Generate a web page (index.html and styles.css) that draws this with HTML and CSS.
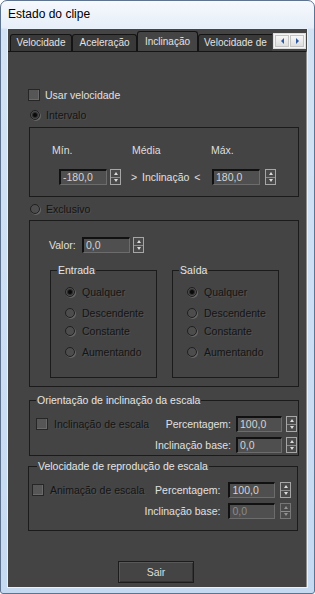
FILE: index.html
```html
<!doctype html>
<html>
<head>
<meta charset="utf-8">
<title>Estado do clipe</title>
<link rel="stylesheet" href="styles.css">
</head>
<body>
<div class="window">
	<div class="titlebar">Estado do clipe</div>
	<div class="client">
		<div class="tabstrip">
			<div class="tabs">
				<div class="tab t1">Velocidade</div>
				<div class="tab t2">Aceleração</div>
				<div class="tab t3 active">Inclinação</div>
				<div class="tab t4">Velocidade de</div>
			</div>
			<div class="tabscroll">
				<span class="sb"><i class="tri-l"></i></span>
				<span class="sb"><i class="tri-r"></i></span>
			</div>
		</div>

		<div class="panel">
			<div class="row check-row">
				<span class="chk"></span><span class="lbl">Usar velocidade</span>
			</div>
			<div class="row radio-row r-intervalo">
				<span class="radio on"></span><span class="lbl off">Intervalo</span>
			</div>

			<div class="box box-range">
				<div class="range-head">
					<span class="h-min">Mín.</span>
					<span class="h-mid">Média</span>
					<span class="h-max">Máx.</span>
				</div>
				<div class="range-vals">
					<span class="field">-180,0</span>
					<span class="spin"><i class="up"></i><i class="dn"></i></span>
					<span class="mid-txt">&gt; Inclinação &lt;</span>
					<span class="field">180,0</span>
					<span class="spin"><i class="up"></i><i class="dn"></i></span>
				</div>
			</div>

			<div class="row radio-row r-exclusivo">
				<span class="radio"></span><span class="lbl off">Exclusivo</span>
			</div>

			<div class="box box-excl">
				<div class="valor-row">
					<span class="valor-lbl">Valor:</span>
					<span class="field">0,0</span>
					<span class="spin"><i class="up"></i><i class="dn"></i></span>
				</div>
				<div class="groups">
					<fieldset class="grp">
						<legend>Entrada</legend>
						<div class="opts">
							<div class="opt"><span class="radio on"></span><span class="lbl off">Qualquer</span></div>
							<div class="opt"><span class="radio"></span><span class="lbl off">Descendente</span></div>
							<div class="opt"><span class="radio"></span><span class="lbl off">Constante</span></div>
							<div class="opt"><span class="radio"></span><span class="lbl off">Aumentando</span></div>
						</div>
					</fieldset>
					<fieldset class="grp">
						<legend>Saída</legend>
						<div class="opts">
							<div class="opt"><span class="radio on"></span><span class="lbl off">Qualquer</span></div>
							<div class="opt"><span class="radio"></span><span class="lbl off">Descendente</span></div>
							<div class="opt"><span class="radio"></span><span class="lbl off">Constante</span></div>
							<div class="opt"><span class="radio"></span><span class="lbl off">Aumentando</span></div>
						</div>
					</fieldset>
				</div>
			</div>

			<fieldset class="sect sect-orient">
				<legend>Orientação de inclinação da escala</legend>
				<div class="sect-body">
					<div class="sect-left">
						<span class="chk"></span><span class="lbl off">Inclinação de escala</span>
					</div>
					<div class="pairs">
						<span class="p-lbl">Percentagem:</span>
						<span class="field">100,0</span>
						<span class="spin"><i class="up"></i><i class="dn"></i></span>
						<span class="p-lbl">Inclinação base:</span>
						<span class="field">0,0</span>
						<span class="spin"><i class="up"></i><i class="dn"></i></span>
					</div>
				</div>
			</fieldset>

			<fieldset class="sect sect-speed">
				<legend>Velocidade de reprodução de escala</legend>
				<div class="sect-body">
					<div class="sect-left">
						<span class="chk"></span><span class="lbl off">Animação de escala</span>
					</div>
					<div class="pairs">
						<span class="p-lbl">Percentagem:</span>
						<span class="field">100,0</span>
						<span class="spin"><i class="up"></i><i class="dn"></i></span>
						<span class="p-lbl">Inclinação base:</span>
						<span class="field dim">0,0</span>
						<span class="spin dim"><i class="up"></i><i class="dn"></i></span>
					</div>
				</div>
			</fieldset>

			<div class="btn-sair">Sair</div>
		</div>
	</div>
</div>
</body>
</html>
```

FILE: styles.css
```css
*{ margin:0; padding:0; box-sizing:border-box;}
body{ width:315px; height:594px; overflow:hidden; font-family:"Liberation Sans", Arial, sans-serif; font-size:10.5px; background:#fff;}

/* janela */
.window{ height:594px; display:flex; flex-direction:column; border:1px solid #5d7390; border-radius:7px 7px 3px 3px; background:linear-gradient(to bottom, #f6f9fd 0, #e6eef8 27px, #d3e3f5 28px, #c5d9f1 100%);}
.titlebar{ height:28px; padding:6px 0 0 7px; font-size:12px; line-height:15px; color:#000;}
.client{ flex:1; margin:0 7px 6px; background:#444; display:flex; flex-direction:column; box-shadow:0 0 0 1px #e9f1fa;}

/* abas */
.tabstrip{ height:22px; display:flex; padding-left:2px; position:relative; z-index:1;}
.tabs{ width:262px; display:flex; align-items:flex-end; overflow:hidden;}
.tab{ flex:none; height:17px; border:1px solid #141414; border-bottom:none; border-radius:3px 3px 0 0; background:#393939; color:#e2e2e2; font-size:10px; line-height:15px; text-align:center; white-space:nowrap; overflow:hidden;}
.tab.active{ height:21px; margin-bottom:-1px; background:#444; line-height:19px;}
.t1{ width:62px;}
.t2{ width:65px;}
.t3{ width:61px;}
.t4{ width:90px; text-align:left; padding-left:5px;}
.tabscroll{ margin:4px 0 0 1px; width:33px; height:16px; display:flex; gap:1px; padding:1px; background:#f4f4f4; border:1px solid #dcdcdc;}
.sb{ flex:1; display:flex; align-items:center; justify-content:center; background:linear-gradient(#f7f7f7, #dedede); border:1px solid #c4c4c4;}
.tri-l{ border-top:3px solid transparent; border-bottom:3px solid transparent; border-right:3px solid #2f5aa0;}
.tri-r{ border-top:3px solid transparent; border-bottom:3px solid transparent; border-left:3px solid #2f5aa0;}

.panel{ flex:1; border-top:1px solid #151515; border-right:1px solid #8f8f8f; display:flex; flex-direction:column; align-items:flex-start;}

/* controles */
.row{ display:flex; align-items:center; height:14px;}
.lbl{ color:#e0e0e0; line-height:14px; white-space:nowrap;}
.lbl.off{ color:#141414; text-shadow:1px 1px 0 #505050;}
.chk{ flex:none; width:12px; height:12px; background:#565656; border:1px solid #262626; box-shadow:inset -1px -1px 0 #6a6a6a;}
.radio{ flex:none; width:10px; height:10px; border-radius:50%; background:#4d4d4d; border:1px solid #202020; box-shadow:1px 1px 0 #666; display:flex; align-items:center; justify-content:center;}
.radio.on::after{ content:""; width:4px; height:4px; border-radius:50%; background:#0a0a0a; box-shadow:0 0 0 1px #2c2c2c;}

.check-row{ margin:36px 0 0 20px; height:13px; gap:5px;}
.radio-row{ margin-left:22px; gap:6px;}
.r-intervalo{ margin-top:7px;}
.r-exclusivo{ margin-top:5px;}

.field{ flex:none; width:48px; height:16px; background:#4f4f4f; border-top:2px solid #111; border-left:2px solid #111; border-bottom:1px solid #6c6c6c; border-right:1px solid #6c6c6c; color:#d4d4d4; line-height:13px; padding-left:2px;}
.field.dim{ color:#8a8a8a;}
.spin{ flex:none; width:11px; height:16px; border:1px solid #a6a6a6; background:#4a4a4a; display:flex; flex-direction:column;}
.spin i{ flex:1; display:flex; align-items:center; justify-content:center;}
.spin .up{ border-bottom:1px solid #8c8c8c;}
.spin .up::after{ content:""; border-left:2px solid transparent; border-right:2px solid transparent; border-bottom:3px solid #dcdcdc;}
.spin .dn::after{ content:""; border-left:2px solid transparent; border-right:2px solid transparent; border-top:3px solid #dcdcdc;}
.spin.dim{ border-color:#777;}
.spin.dim i::after{ opacity:.5;}

/* caixas */
.box{ margin-left:21px; width:270px; border:1px solid #1b1b1b;}
.box-range{ margin-top:5px; height:70px; padding-top:15px;}
.range-head{ display:flex; padding-left:22px; color:#dedede; line-height:14px;}
.h-min{ width:80px;}
.h-mid{ width:79px;}
.range-vals{ display:flex; align-items:center; margin-top:12px; padding-left:29px;}
.range-vals .spin{ margin-left:3px;}
.mid-txt{ width:91px; padding-left:10px; color:#e0e0e0; word-spacing:2px; white-space:nowrap;}
.range-vals .mid-txt + .field + .spin{ margin-left:5px;}

.box-excl{ margin-top:4px; height:167px; padding:16px 0 0 19px;}
.valor-row{ display:flex; align-items:center;}
.valor-lbl{ width:33px; color:#e0e0e0;}
.valor-row .spin{ margin-left:3px;}
.groups{ display:flex; gap:15px; margin-top:10px; padding-left:1px;}

fieldset{ border:1px solid #1b1b1b; min-width:0;}
legend{ margin-left:6px; padding:0 1px; line-height:14px; color:#e4e4e4; white-space:nowrap;}
.grp{ width:107px; height:115px;}
.opts{ padding:8px 0 0 14px;}
.opt{ display:flex; align-items:center; gap:7px; height:14px;}
.opt:nth-child(2){ margin-top:7px;}
.opt:nth-child(3){ margin-top:4px;}
.opt:nth-child(4){ margin-top:7px;}

/* secoes de escala */
.sect{ margin-left:21px; width:270px;}
.sect-orient{ margin-top:6px; height:63px;}
.sect-speed{ margin-top:3px; margin-left:20px; height:72px;}
.sect-speed legend{ margin-left:8px;}
.sect-body{ display:flex; padding-top:9px;}
.sect-left{ flex:1; display:flex; align-items:center; gap:6px; height:14px; margin-top:1px;}
.sect-orient .sect-left{ padding-left:6px;}
.sect-speed .sect-left{ padding-left:3px;}
.pairs{ display:grid; grid-template-columns:auto 46px 11px; row-gap:5px; column-gap:4px; align-items:center;}
.sect-orient .pairs{ padding-right:1px;}
.sect-orient .p-lbl{ margin-right:1px;}
.sect-speed .pairs{ grid-template-columns:auto 47px 11px; column-gap:5px; row-gap:5px; padding-right:13px;}
.sect-speed .p-lbl{ margin-right:3px;}
.p-lbl{ text-align:right; color:#e0e0e0; white-space:nowrap;}
.pairs .field{ width:auto;}

.btn-sair{ margin:30px 0 0 110px; width:76px; height:22px; border:1px solid #1c1c1c; box-shadow:inset 1px 1px 0 #585858, inset -1px -1px 0 #333; background:#444; color:#dedede; text-align:center; line-height:20px;}
```
